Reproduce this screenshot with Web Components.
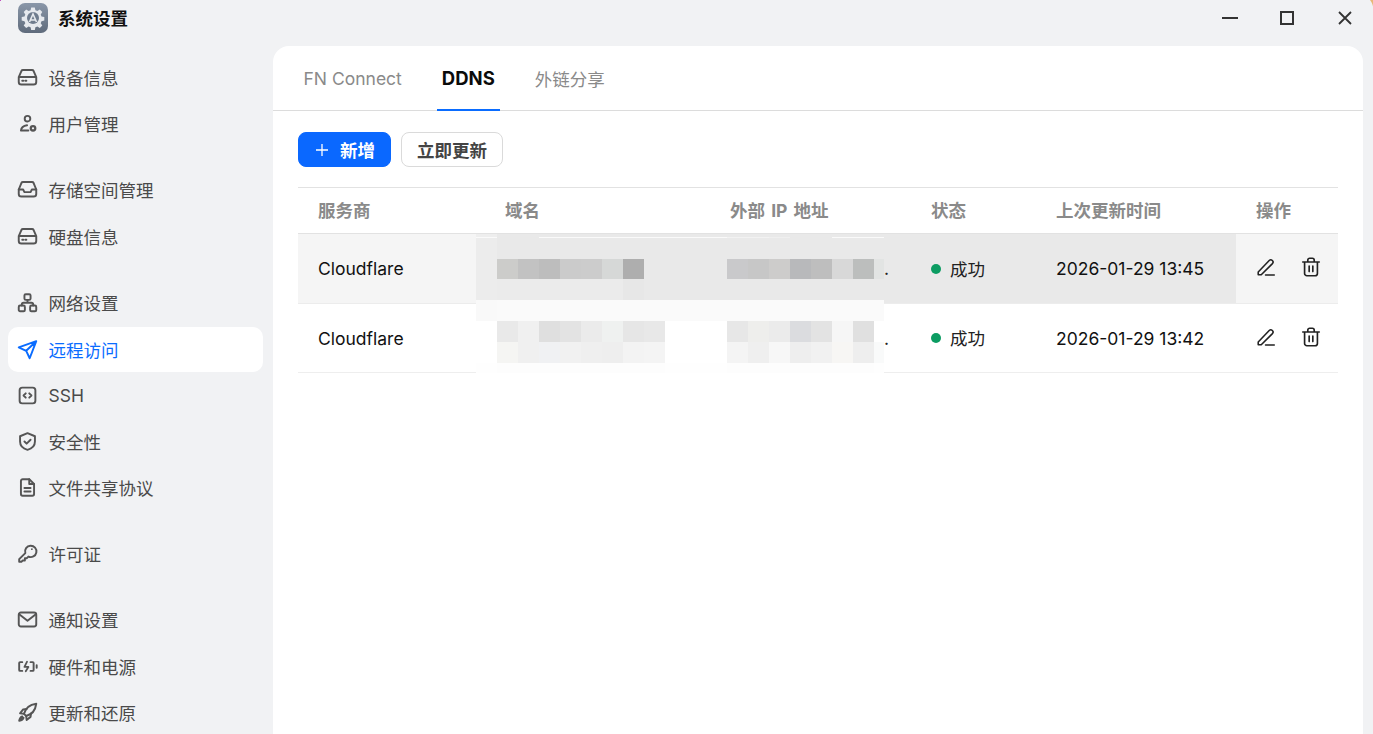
<!DOCTYPE html>
<html lang="zh">
<head>
<meta charset="utf-8">
<title>系统设置</title>
<style>
    html, body { margin: 0; height: 100%; overflow: hidden; }
    body { font-family: Inter, "Noto Sans CJK SC", sans-serif; background: #f1f2f4; }
</style>
</head>
<body>
<settings-app></settings-app>

<script>
const ICONS = {
    disk: '<path d="M2 11.5 5 4.6A2 2 0 0 1 6.8 3.5h10.4A2 2 0 0 1 19 4.6l3 6.9M2 11.5v5.5a3 3 0 0 0 3 3h14a3 3 0 0 0 3-3v-5.5M2 11.5h20"/><path d="M6 15.8h1.2M9.5 15.8h1.2"/>',
    user: '<circle cx="12" cy="6.5" r="3.2"/><path d="M4.5 20H13M4.5 20c.3-3 3-5.5 7-6"/><circle cx="18.3" cy="17.5" r="2.6" stroke-width="2.6"/>',
    inbox: '<path d="M2 12 5 4.6A2 2 0 0 1 6.8 3.5h10.4A2 2 0 0 1 19 4.6l3 7.4v5a3 3 0 0 1-3 3H5a3 3 0 0 1-3-3z"/><path d="M2 12h5l1.5 3h7l1.5-3h5"/>',
    network: '<rect x="8.5" y="2.5" width="7" height="6.5" rx="1.5"/><rect x="2" y="15.5" width="7" height="6.5" rx="1.5"/><rect x="15" y="15.5" width="7" height="6.5" rx="1.5"/><path d="M12 9v3.2M5.5 15.5v-1.3a2 2 0 0 1 2-2h9a2 2 0 0 1 2 2v1.3"/>',
    send: '<path d="M22 2.5 2 9.5l8.5 4 4 8.5zM22 2.5 10.5 13.5"/>',
    code: '<rect x="3" y="3" width="18" height="18" rx="3"/><path d="m10 9.5-2.5 2.5 2.5 2.5M14 9.5l2.5 2.5-2.5 2.5"/>',
    shield: '<path d="M12 2.5 20.5 6v6c0 5-3.5 8.2-8.5 9.5C7 20.2 3.5 17 3.5 12V6z"/><path d="m8.5 12 2.5 2.5 4.5-4.5"/>',
    doc: '<path d="M14 2.5H6.5a2 2 0 0 0-2 2v15a2 2 0 0 0 2 2h11a2 2 0 0 0 2-2V8z"/><path d="M14 2.5V8h5.5M8.5 12.5h7M8.5 16.5h7"/>',
    key: '<path d="M9.5 11.5A6.5 6.5 0 1 1 13 15.5L11 17.5H9V20H6.5L5 21.5H2.5V18.5z"/><circle cx="17" cy="7" r="1" fill="currentColor" stroke="none"/>',
    mail: '<rect x="2" y="4" width="20" height="16" rx="2.5"/><path d="m2.5 6 9.5 7.5L21.5 6"/>',
    power: '<path d="M6 7H3.5a1 1 0 0 0-1 1v8a1 1 0 0 0 1 1H6M15.5 7H18a1 1 0 0 1 1 1v8a1 1 0 0 1-1 1h-2.5M22.5 10.5v3"/><path d="M11.5 6.5 8.5 12.5H13l-3 5" stroke-width="2"/>',
    rocket: '<path d="M8 13.5C9.5 7.5 14.5 3 22 2c-1 7.5-5.5 12.5-11.5 14z"/><path d="M8 13.5 3.5 13 7 8.5l4-.5M10.5 16l.5 4.5 4.5-3.5.5-4"/><path d="M6 16.5c-2 .5-3 2.5-3.5 5 2.5-.5 4.5-1.5 5-3.5" fill="currentColor"/>',
    pen: '<path d="M3.5 17.5 15.5 5A2.4 2.4 0 0 1 19 8.3L6.8 20.5H3.5zM11.5 20.8H21"/>',
    trash: '<path d="M3 6.5h18M8.5 6.5v-2a2 2 0 0 1 2-2h3a2 2 0 0 1 2 2v2M5 6.5V19a2.5 2.5 0 0 0 2.5 2.5h9A2.5 2.5 0 0 0 19 19V6.5M10 11v6M14 11v6"/>'
};

function icon(name, size, width) {
    return `<svg width="${size}" height="${size}" viewBox="0 0 24 24" fill="none" stroke="currentColor" stroke-width="${width}" stroke-linecap="round" stroke-linejoin="round">${ICONS[name]}</svg>`;
}

class WindowBar extends HTMLElement {
    connectedCallback() {
        this.attachShadow({ mode: 'open' });
        this.shadowRoot.innerHTML = `
            <style>
                :host { display: flex; align-items: center; height: 46px; padding: 0 0 10px 18px; box-sizing: border-box; }
                .logo { width: 30px; height: 30px; border-radius: 7px; display: flex; align-items: center; justify-content: center;
                    background: linear-gradient(#8a97a9, #5f6b7c); }
                .title { margin-left: 10px; padding-top: 1px; font-size: 17.5px; font-weight: 700; color: #111; line-height: 30px; }
                .controls { margin-left: auto; display: flex; align-items: center; gap: 42px; padding-right: 21px; color: #333; }
                svg { display: block; }
                .close { margin-left: 1px; }
                .corner { position: absolute; top: 0; right: 0; }
                .pin { position: absolute; top: 0; left: 0; width: 1px; height: 1px; background: #c04fc0; }
            </style>
            <div class="logo">
                <svg width="24" height="24" viewBox="0 0 24 24">
                    <path fill="#e6e9ee" d="M10.2 1.5h3.6l.6 2.8 2 .8 2.4-1.6 2.5 2.5-1.6 2.4.8 2 2.8.6v3.6l-2.8.6-.8 2 1.6 2.4-2.5 2.5-2.4-1.6-2 .8-.6 2.8h-3.6l-.6-2.8-2-.8-2.4 1.6-2.5-2.5 1.6-2.4-.8-2-2.8-.6v-3.6l2.8-.6.8-2-1.6-2.4 2.5-2.5 2.4 1.6 2-.8z"/>
                    <circle cx="12" cy="12" r="6" fill="#6f7c8e"/>
                    <path fill="none" stroke="#e6e9ee" stroke-width="1.6" d="M8.5 16 12 8l3.5 8M9.8 14h4.4"/>
                </svg>
            </div>
            <span class="title">系统设置</span>
            <div class="controls">
                <svg width="16" height="18" viewBox="0 0 16 18" fill="none" stroke="currentColor" stroke-width="2"><path d="M0 9h16"/></svg>
                <svg width="15" height="15" viewBox="0 0 15 15" fill="none" stroke="currentColor" stroke-width="2"><rect x="1" y="1" width="12" height="12"/></svg>
                <svg class="close" width="14" height="14" viewBox="0 0 14 14" fill="none" stroke="currentColor" stroke-width="1.8"><path d="M1 1l12 12M13 1 1 13"/></svg>
            </div>
            <svg class="corner" width="4" height="7" viewBox="0 0 4 7"><path fill="#e8b878" d="M1 0h3v6.5C3.5 4 2.5 2 1 0z"/></svg>
            <span class="pin"></span>
        `;
    }
}

class NavItem extends HTMLElement {
    connectedCallback() {
        const active = this.hasAttribute('active');
        this.attachShadow({ mode: 'open' });
        this.shadowRoot.innerHTML = `
            <style>
                :host { display: block; margin-bottom: 1.2px; }
                .item { display: flex; align-items: center; height: 45px; padding-left: 9px; border-radius: 10px;
                    font-size: 17.5px; color: ${active ? '#0a6cff' : '#4a4a4a'}; background: ${active ? '#fff' : 'transparent'}; }
                .ico { width: 21px; height: 21px; margin-right: 10.5px; display: flex; align-items: center; justify-content: center; }
                .ico { color: ${active ? '#0a6cff' : '#555'}; }
            </style>
            <div class="item">
                <span class="ico">${icon(this.getAttribute('icon'), 21, 2.2)}</span>
                <slot></slot>
            </div>
        `;
    }
}

class SideNav extends HTMLElement {
    connectedCallback() {
        this.attachShadow({ mode: 'open' });
        this.shadowRoot.innerHTML = `
            <style>
                :host { display: block; width: 273px; box-sizing: border-box; padding: 9px 10px 0 8px; flex: none; }
            </style>
            <slot></slot>
        `;
    }
}

class TabBar extends HTMLElement {
    connectedCallback() {
        this.attachShadow({ mode: 'open' });
        this.shadowRoot.innerHTML = `
            <style>
                :host { display: flex; height: 65px; box-sizing: border-box; border-bottom: 1px solid #dcdcdc; padding-left: 25.5px; gap: 30px; }
                .tab { position: relative; display: flex; align-items: center; padding: 0 5px; height: 64px; font-size: 17.5px; color: #8a8a8a; }
                .tab.on { color: #0b0b0b; font-weight: 700; font-size: 18.5px; }
                .tab.on::after { content: ""; position: absolute; left: 0; right: 0; bottom: -1px; height: 2px; background: #0a6cff; }
            </style>
            <div class="tab">FN Connect</div>
            <div class="tab on">DDNS</div>
            <div class="tab">外链分享</div>
        `;
    }
}

class UiButton extends HTMLElement {
    connectedCallback() {
        const primary = this.hasAttribute('primary');
        this.attachShadow({ mode: 'open' });
        this.shadowRoot.innerHTML = `
            <style>
                :host { display: inline-block; }
                button { display: flex; align-items: center; height: 35px; box-sizing: border-box; border-radius: 8px; font: inherit; font-size: 17.5px; font-weight: 700;
                    padding: 0 ${primary ? '15px 0 17px' : '15px'};
                    color: ${primary ? '#fff' : '#444'};
                    background: ${primary ? '#0a68ff' : '#fff'};
                    border: 1px solid ${primary ? '#0a68ff' : '#dadada'}; }
                svg { margin-right: 12px; display: block; }
            </style>
            <button>${primary ? '<svg width="12" height="12" viewBox="0 0 12 12" stroke="#fff" stroke-width="1.3"><path d="M6 0v12M0 6h12"/></svg>' : ''}<slot></slot></button>
        `;
    }
}

// pixelated blur that sits over the domain and IP columns
const MOSAIC = {
    cols: '21px 21px 21px 21px 21px 21px 21px 21px 21px 62px 21px 21px 21px 21px 21px 21px 21px 10px',
    rows: '3px 1px 21px 20px 21px 21px 21px 21px 10px',
    cells: [
        'eeeeee e9e9e9 e9e9e9 e9e9e9 e9e9e9 e9e9e9 e9e9e9 e9e9e9 e9e9e9 e9e9e9 e9e9e9 e9e9e9 e9e9e9 e9e9e9 e9e9e9 e9e9e9 e9e9e9 e9e9e9',
        'fafafa e9e9e9 e9e9e9 fafafa fafafa fafafa fafafa fafafa fafafa fafafa f2f2f2 f2f2f2 efefef e9e9e9 e9e9e9 fafafa fafafa fafafa',
        'ececec e9e9e9 e9e9e9 e9e9e9 e9e9e9 e9e9e9 e9e9e9 e9e9e9 e9e9e9 e9e9e9 e9e9e9 e9e9e9 e9e9e9 e9e9e9 e9e9e9 e9e9e9 e9e9e9 e9e9e9',
        'ececec ccccca c2c2c2 bdbdbd cbcbcb cccccc d6d8d7 aeaeae e9e9e9 e9e9e9 c9c9cb c7c7c7 cdcccb b8b9bb bebebe d8d8d8 bcbebd e2e4e3',
        'ececec ebebeb ebebeb ebebeb ebebeb ebebeb ebebeb e7e7e7 e9e9e9 e9e9e9 e9e9e9 e9e9e9 e9e9e9 e9e9e9 e9e9e9 e9e9e9 e9e9e9 e9e9e9',
        'f9f9f9 fafafa fafafa fafafa fafafa fafafa fafafa fafafa fafafa fafafa fafafa fafafa fafafa fafafa fafafa fafafa fafafa fafafa',
        'ffffff e9e9e9 f0f0f0 dfdfdf e3e3e3 ebebeb eff1f0 e6e6e6 e8e8e8 ffffff e7e7e7 eeeeec ebebeb dbdcdf e3e3e3 f6f6f6 e0e0e0 ffffff',
        'ffffff f5f5f3 f0f0f0 f0f1f3 f1f1f1 efefef eeeeee f3f3f3 f4f4f4 ffffff f4f4f4 efefef f7f7f7 eeeeee f1f1f1 f7f6f4 eeeeee f9fafa',
        'fefefe fdfdfd fdfdfd fdfdfd fdfdfd fdfdfd fdfdfd fdfdfd fdfdfd fefefe fdfdfd fdfdfd fdfdfd fdfdfd fdfdfd fdfdfd fdfdfd fefefe'
    ]
};

class MosaicBlur extends HTMLElement {
    connectedCallback() {
        const cells = MOSAIC.cells.map(row => row.split(' ').map(c => `<i style="background:#${c}"></i>`).join('')).join('');
        this.attachShadow({ mode: 'open' });
        this.shadowRoot.innerHTML = `
            <style>
                :host { position: absolute; left: 178px; top: 47px; display: grid;
                    grid-template-columns: ${MOSAIC.cols}; grid-template-rows: ${MOSAIC.rows}; }
            </style>
            ${cells}
        `;
    }
}

class DdnsRow extends HTMLElement {
    connectedCallback() {
        const hover = this.hasAttribute('hover');
        this.attachShadow({ mode: 'open' });
        this.shadowRoot.innerHTML = `
            <style>
                :host { display: grid; grid-template-columns: 187px 225px 201px 125px 200px 102px; height: ${hover ? 70 : 69}px; box-sizing: border-box;
                    border-bottom: 1px solid ${hover ? '#ececec' : '#eeeeee'}; font-size: 17.5px; color: #111; background: ${hover ? '#f5f5f5' : '#fff'}; }
                .c { display: flex; align-items: center; padding-left: 20px; ${hover ? 'background: #e9e9e9;' : ''} }
                .first { ${hover ? 'background: transparent;' : ''} }
                .ip { padding-left: 174px; color: #222; }
                .state { color: #222; padding-bottom: 1px; }
                .dot { width: 10px; height: 10px; border-radius: 50%; background: #0c9c62; margin: 1px 9px 0 0; }
                .ops { background: transparent; padding: 0 0 3px 19px; gap: 23px; color: #222; }
            </style>
            <div class="c first">${this.getAttribute('vendor')}</div>
            <div class="c"></div>
            <div class="c ip">.</div>
            <div class="c state"><span class="dot"></span>成功</div>
            <div class="c">${this.getAttribute('time')}</div>
            <div class="c ops">${icon('pen', 22, 1.7)}${icon('trash', 22, 1.8)}</div>
        `;
    }
}

class DdnsTable extends HTMLElement {
    connectedCallback() {
        this.attachShadow({ mode: 'open' });
        this.shadowRoot.innerHTML = `
            <style>
                :host { display: block; position: relative; margin-top: 20px; }
                .head { display: grid; grid-template-columns: 187px 225px 201px 125px 200px 102px; height: 47px; box-sizing: border-box; align-items: center;
                    padding-bottom: 2px; border-top: 1px solid #e2e2e2; border-bottom: 1px solid #e2e2e2; font-size: 17.5px; font-weight: 700; color: #8a8a8a; word-spacing: 2px; }
                .head div { padding-left: 20px; }
            </style>
            <div class="head">
                <div>服务商</div><div>域名</div><div>外部 IP 地址</div><div>状态</div><div>上次更新时间</div><div>操作</div>
            </div>
            <slot></slot>
            <mosaic-blur></mosaic-blur>
        `;
    }
}

class SettingsApp extends HTMLElement {
    connectedCallback() {
        this.attachShadow({ mode: 'open' });
        this.shadowRoot.innerHTML = `
            <style>
                :host { display: flex; flex-direction: column; height: 734px; overflow: hidden; font-family: Inter, "Noto Sans CJK SC", sans-serif; }
                .body { display: flex; flex: 1; min-height: 0; }
                .main { flex: 1; margin-right: 10px; background: #fff; border-radius: 16px 16px 0 0; }
                .content { padding: 21px 25px; }
                .actions { display: flex; gap: 10px; }
                .group { margin-bottom: 21.2px; }
                .group.wide { margin-bottom: 21.8px; }
            </style>
            <window-bar></window-bar>
            <div class="body">
                <side-nav>
                    <div class="group">
                        <nav-item icon="disk">设备信息</nav-item>
                        <nav-item icon="user">用户管理</nav-item>
                    </div>
                    <div class="group wide">
                        <nav-item icon="inbox">存储空间管理</nav-item>
                        <nav-item icon="disk">硬盘信息</nav-item>
                    </div>
                    <div class="group">
                        <nav-item icon="network">网络设置</nav-item>
                        <nav-item icon="send" active>远程访问</nav-item>
                        <nav-item icon="code">SSH</nav-item>
                        <nav-item icon="shield">安全性</nav-item>
                        <nav-item icon="doc">文件共享协议</nav-item>
                    </div>
                    <div class="group">
                        <nav-item icon="key">许可证</nav-item>
                    </div>
                    <div class="group">
                        <nav-item icon="mail">通知设置</nav-item>
                        <nav-item icon="power">硬件和电源</nav-item>
                        <nav-item icon="rocket">更新和还原</nav-item>
                    </div>
                </side-nav>
                <div class="main">
                    <tab-bar></tab-bar>
                    <div class="content">
                        <div class="actions">
                            <ui-button primary>新增</ui-button>
                            <ui-button>立即更新</ui-button>
                        </div>
                        <ddns-table>
                            <ddns-row hover vendor="Cloudflare" time="2026-01-29 13:45"></ddns-row>
                            <ddns-row vendor="Cloudflare" time="2026-01-29 13:42"></ddns-row>
                        </ddns-table>
                    </div>
                </div>
            </div>
        `;
    }
}

customElements.define('window-bar', WindowBar);
customElements.define('nav-item', NavItem);
customElements.define('side-nav', SideNav);
customElements.define('tab-bar', TabBar);
customElements.define('ui-button', UiButton);
customElements.define('mosaic-blur', MosaicBlur);
customElements.define('ddns-row', DdnsRow);
customElements.define('ddns-table', DdnsTable);
customElements.define('settings-app', SettingsApp);
</script>
</body>
</html>
